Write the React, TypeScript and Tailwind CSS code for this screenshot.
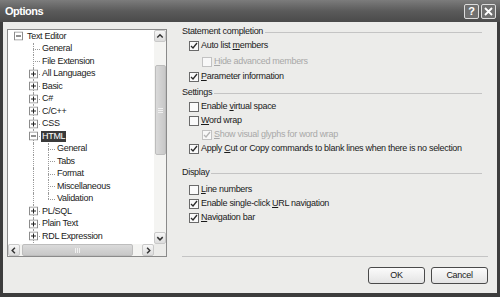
import React from "react";

type TreeRow = {
  label: string;
  level: number;
  box?: "+" | "-";
  selected?: boolean;
  last?: boolean;
};

const treeRows: TreeRow[] = [
  { label: "Text Editor", level: 0, box: "-" },
  { label: "General", level: 1 },
  { label: "File Extension", level: 1 },
  { label: "All Languages", level: 1, box: "+" },
  { label: "Basic", level: 1, box: "+" },
  { label: "C#", level: 1, box: "+" },
  { label: "C/C++", level: 1, box: "+" },
  { label: "CSS", level: 1, box: "+" },
  { label: "HTML", level: 1, box: "-", selected: true },
  { label: "General", level: 2 },
  { label: "Tabs", level: 2 },
  { label: "Format", level: 2 },
  { label: "Miscellaneous", level: 2 },
  { label: "Validation", level: 2, last: true },
  { label: "PL/SQL", level: 1, box: "+" },
  { label: "Plain Text", level: 1, box: "+" },
  { label: "RDL Expression", level: 1, box: "+" },
];

const ExpandBox = ({ sign }: { sign: "+" | "-" }) => (
  <svg
    width="9"
    height="9"
    viewBox="0 0 9 9"
    className="absolute left-[3px] top-1/2 -translate-y-1/2"
  >
    <rect x="0.5" y="0.5" width="8" height="8" fill="#fff" stroke="#8c8c8c" />
    <path d="M2 4.5h5" stroke="#222" />
    {sign === "+" && <path d="M4.5 2v5" stroke="#222" />}
  </svg>
);

const Row = ({ row }: { row: TreeRow }) => (
  <div className="flex h-[12.5px] items-center pl-[3px]">
    {row.level >= 1 && <div className="w-[15px] self-stretch" />}
    {row.level === 2 && (
      <div className="relative w-[15px] self-stretch">
        <span className="absolute left-[7px] top-0 bottom-0 border-l border-dotted border-[#9a9a9a]" />
      </div>
    )}
    <div className="relative w-[15px] self-stretch">
      {row.level > 0 && (
        <>
          <span
            className={
              row.last
                ? "absolute left-[7px] top-0 h-1/2 border-l border-dotted border-[#9a9a9a]"
                : "absolute left-[7px] top-0 bottom-0 border-l border-dotted border-[#9a9a9a]"
            }
          />
          <span className="absolute left-[7px] right-[1px] top-1/2 border-t border-dotted border-[#9a9a9a]" />
        </>
      )}
      {row.box && <ExpandBox sign={row.box} />}
    </div>
    <span
      className={
        row.selected
          ? "px-[1px] leading-[11px] bg-[#3a3a3a] text-white"
          : "ml-[1px] leading-[11px] text-[#1a1a1a] whitespace-nowrap"
      }
    >
      {row.label}
    </span>
  </div>
);

const Arrow = ({ dir }: { dir: "up" | "down" | "left" | "right" }) => {
  const d = {
    up: "M2.5 6.5l3-3 3 3",
    down: "M2.5 4l3 3 3-3",
    left: "M6.5 2.5l-3 3 3 3",
    right: "M4.5 2.5l3 3-3 3",
  }[dir];
  return (
    <svg width="11" height="11" viewBox="0 0 11 11">
      <path d={d} fill="none" stroke="#333" strokeWidth="1.6" />
    </svg>
  );
};

const ScrollButton = ({ dir }: { dir: "up" | "down" | "left" | "right" }) => (
  <div className="flex h-[12px] w-[12px] shrink-0 items-center justify-center rounded-[2px] border border-[#c9c9c9] bg-gradient-to-b from-[#f7f7f7] to-[#dcdcdc]">
    <Arrow dir={dir} />
  </div>
);

const Check = ({ checked, disabled }: { checked?: boolean; disabled?: boolean }) => (
  <span
    className={
      disabled
        ? "flex h-[10px] w-[10px] shrink-0 items-center justify-center border border-[#c2c2c2] bg-[#f8f8f8]"
        : "flex h-[10px] w-[10px] shrink-0 items-center justify-center border border-[#6a6a6a] bg-[#fafafa]"
    }
  >
    {checked && (
      <svg width="8" height="8" viewBox="0 0 8 8">
        <path
          d="M1 4l2 2 4-5"
          fill="none"
          stroke={disabled ? "#b5b5b5" : "#2a2a2a"}
          strokeWidth="1.3"
        />
      </svg>
    )}
  </span>
);

const Option = ({
  children,
  checked,
  disabled,
  indent,
  className,
}: {
  children: React.ReactNode;
  checked?: boolean;
  disabled?: boolean;
  indent?: boolean;
  className?: string;
}) => (
  <div
    className={`flex h-[14px] items-center gap-[2px] ${indent ? "pl-[20px]" : "pl-[7px]"} ${className ?? ""}`}
  >
    <Check checked={checked} disabled={disabled} />
    <span className={disabled ? "text-[#a8a8a8] whitespace-nowrap" : "text-[#1a1a1a] whitespace-nowrap"}>
      {children}
    </span>
  </div>
);

const GroupLabel = ({ text, className }: { text: string; className?: string }) => (
  <div className={`flex h-[14px] items-center pr-[6px] ${className ?? ""}`}>
    <span className="text-[#1a1a1a]">{text}</span>
    <span className="ml-[2px] h-px flex-1 bg-[#c4c4c4]" />
  </div>
);

export default function App() {
  return (
    <div className="flex h-[297px] w-[500px] flex-col bg-[#3d3d3d] font-['Liberation_Sans',Arial,sans-serif] text-[9px] tracking-[-0.3px]">
      {/* title bar */}
      <div className="flex h-[22px] items-center justify-between bg-gradient-to-b from-[#7c7c7c] via-[#5b5b5b] to-[#4a4a4a] pl-[5px] pr-[4px]">
        <span className="text-[11px] font-bold tracking-[-0.5px] text-white">Options</span>
        <div className="flex gap-[2px]">
          <div className="flex h-[15px] w-[15px] items-center justify-center rounded-[2px] border border-[#dcdcdc] bg-[#707070] text-[11px] font-bold text-white">
            ?
          </div>
          <div className="flex h-[15px] w-[15px] items-center justify-center rounded-[2px] border border-[#dcdcdc] bg-[#707070]">
            <svg width="9" height="9" viewBox="0 0 9 9">
              <path d="M1 1l7 7M8 1l-7 7" stroke="#fff" strokeWidth="1.8" />
            </svg>
          </div>
        </div>
      </div>

      {/* body */}
      <div className="mx-[3px] mb-[4px] flex flex-1 flex-col bg-[#ececea] pl-[4px] pr-[9px] pt-[3px]">
        <div className="flex">
          {/* tree */}
          <div className="mt-[4px] flex h-[228px] w-[160px] shrink-0 flex-col border border-[#8a8a8a] bg-white">
            <div className="flex min-h-0 flex-1">
              <div className="flex-1 overflow-hidden">
                {treeRows.map((r, i) => (
                  <Row key={i} row={r} />
                ))}
              </div>
              <div className="flex w-[12px] flex-col bg-[#f4f4f2]">
                <ScrollButton dir="up" />
                <div className="flex-1">
                  <div className="mx-auto mt-[23px] flex h-[90px] w-[11px] items-center justify-center rounded-[2px] border border-[#bdbdbd] bg-gradient-to-r from-[#dadada] to-[#c8c8c8]">
                    <div className="flex flex-col gap-[1px]">
                      <span className="h-px w-[5px] bg-[#f0f0f0]" />
                      <span className="h-px w-[5px] bg-[#f0f0f0]" />
                      <span className="h-px w-[5px] bg-[#f0f0f0]" />
                    </div>
                  </div>
                </div>
                <ScrollButton dir="down" />
              </div>
            </div>
            <div className="flex h-[12px]">
              <div className="flex flex-1 bg-[#f4f4f2]">
                <ScrollButton dir="left" />
                <div className="flex-1">
                  <div className="ml-[2px] flex h-[12px] w-[111px] items-center justify-center rounded-[2px] border border-[#bdbdbd] bg-gradient-to-b from-[#dadada] to-[#c8c8c8]">
                    <div className="flex gap-[1px]">
                      <span className="h-[5px] w-px bg-[#f0f0f0]" />
                      <span className="h-[5px] w-px bg-[#f0f0f0]" />
                      <span className="h-[5px] w-px bg-[#f0f0f0]" />
                    </div>
                  </div>
                </div>
                <ScrollButton dir="right" />
              </div>
              <div className="w-[12px] bg-[#ececea]" />
            </div>
          </div>

          {/* settings */}
          <div className="ml-[15px] flex h-[232px] flex-1 flex-col">
            <GroupLabel text="Statement completion" />
            <Option checked>
              Auto list <u>m</u>embers
            </Option>
            <Option disabled indent className="mt-[2px]">
              <u>H</u>ide advanced members
            </Option>
            <Option checked className="mt-[1px]">
              <u>P</u>arameter information
            </Option>
            <GroupLabel text="Settings" className="mt-[2px]" />
            <Option>
              Enable <u>v</u>irtual space
            </Option>
            <Option>
              <u>W</u>ord wrap
            </Option>
            <Option checked disabled indent>
              <u>S</u>how visual glyphs for word wrap
            </Option>
            <Option checked>
              Apply <u>C</u>ut or Copy commands to blank lines when there is no selection
            </Option>
            <GroupLabel text="Display" className="mt-[10px]" />
            <Option className="mt-[3px]">
              <u>L</u>ine numbers
            </Option>
            <Option checked>
              Enable single-click <u>U</u>RL navigation
            </Option>
            <Option checked>
              <u>N</u>avigation bar
            </Option>
            <div className="flex-1" />
            <div className="h-px bg-[#c4c4c4]" />
          </div>
        </div>

        {/* buttons */}
        <div className="mt-[10px] flex justify-end gap-[6px]">
          <button className="h-[17px] w-[57px] rounded-[3px] border border-[#4a4a4a] bg-gradient-to-b from-[#fbfbfb] to-[#e4e4e4] text-[9px] text-[#1a1a1a]">
            OK
          </button>
          <button className="h-[17px] w-[57px] rounded-[3px] border border-[#4a4a4a] bg-gradient-to-b from-[#fbfbfb] to-[#e4e4e4] text-[9px] text-[#1a1a1a]">
            Cancel
          </button>
        </div>
      </div>
    </div>
  );
}
